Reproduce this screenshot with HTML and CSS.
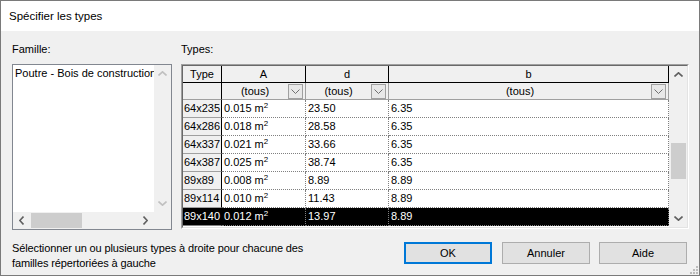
FILE: index.html
```html
<!DOCTYPE html>
<html lang="fr">
<head>
<meta charset="utf-8">
<title>Spécifier les types</title>
<link rel="stylesheet" href="styles.css">
</head>
<body>
<div class="window">
  <div class="titlebar">Spécifier les types</div>
  <div class="content">
    <div class="panes">
      <div class="pane-famille">
        <div class="label">Famille:</div>
        <div class="listbox">
          <div class="lb-main">
            <div class="lb-items"><div class="lb-item">Poutre - Bois de construction</div></div>
            <div class="lb-vscroll">
              <div class="sb-btn"><svg width="9" height="5" viewBox="0 0 9 5"><polyline points="0.5,4.5 4.5,0.8 8.5,4.5" class="chev dis"/></svg></div>
              <div class="sb-track"></div>
              <div class="sb-btn"><svg width="9" height="5" viewBox="0 0 9 5"><polyline points="0.5,0.5 4.5,4.2 8.5,0.5" class="chev dis"/></svg></div>
            </div>
          </div>
          <div class="lb-bottom">
            <div class="lb-hscroll">
              <div class="sb-hbtn"><svg width="5" height="9" viewBox="0 0 5 9"><polyline points="4.5,0.5 0.8,4.5 4.5,8.5" class="chev"/></svg></div>
              <div class="h-track"><div class="h-thumb"></div></div>
              <div class="sb-hbtn"><svg width="5" height="9" viewBox="0 0 5 9"><polyline points="0.5,0.5 4.2,4.5 0.5,8.5" class="chev"/></svg></div>
            </div>
            <div class="lb-corner"></div>
          </div>
        </div>
      </div>
      <div class="pane-types">
        <div class="label">Types:</div>
        <div class="grid-frame">
          <div class="grid-inner">
            <div class="grid">
              <div class="hc hc-type">Type</div>
              <div class="hc">A</div>
              <div class="hc">d</div>
              <div class="hc">b</div>

              <div class="fc fc-type"></div>
              <div class="fc"><span class="fc-text">(tous)</span><span class="dd"><svg width="9" height="5" viewBox="0 0 9 5"><polyline points="0.5,0.5 4.5,4.5 8.5,0.5" class="ddchev"/></svg></span></div>
              <div class="fc"><span class="fc-text">(tous)</span><span class="dd"><svg width="9" height="5" viewBox="0 0 9 5"><polyline points="0.5,0.5 4.5,4.5 8.5,0.5" class="ddchev"/></svg></span></div>
              <div class="fc"><span class="fc-text">(tous)</span><span class="dd"><svg width="9" height="5" viewBox="0 0 9 5"><polyline points="0.5,0.5 4.5,4.5 8.5,0.5" class="ddchev"/></svg></span></div>

              <div class="rc">64x235</div><div class="dc">0.015 m<span class="sup">2</span></div><div class="dc">23.50</div><div class="dc">6.35</div>
              <div class="rc">64x286</div><div class="dc">0.018 m<span class="sup">2</span></div><div class="dc">28.58</div><div class="dc">6.35</div>
              <div class="rc">64x337</div><div class="dc">0.021 m<span class="sup">2</span></div><div class="dc">33.66</div><div class="dc">6.35</div>
              <div class="rc">64x387</div><div class="dc">0.025 m<span class="sup">2</span></div><div class="dc">38.74</div><div class="dc">6.35</div>
              <div class="rc">89x89</div><div class="dc">0.008 m<span class="sup">2</span></div><div class="dc">8.89</div><div class="dc">8.89</div>
              <div class="rc">89x114</div><div class="dc">0.010 m<span class="sup">2</span></div><div class="dc">11.43</div><div class="dc">8.89</div>
              <div class="rc sel">89x140</div><div class="dc sel">0.012 m<span class="sup">2</span></div><div class="dc sel">13.97</div><div class="dc sel">8.89</div>
            </div>
            <div class="g-vscroll">
              <div class="sb-btn"><svg width="9" height="5" viewBox="0 0 9 5"><polyline points="0.5,4.5 4.5,0.8 8.5,4.5" class="chev"/></svg></div>
              <div class="g-track"><div class="g-thumb"></div></div>
              <div class="sb-btn"><svg width="9" height="5" viewBox="0 0 9 5"><polyline points="0.5,0.5 4.5,4.2 8.5,0.5" class="chev"/></svg></div>
            </div>
          </div>
        </div>
      </div>
    </div>
    <div class="footer">
      <div class="hint">Sélectionner un ou plusieurs types à droite pour chacune des<br>familles répertoriées à gauche</div>
      <div class="buttons">
        <div class="btn btn-default">OK</div>
        <div class="btn">Annuler</div>
        <div class="btn">Aide</div>
      </div>
    </div>
  </div>
  <svg class="grip" width="9" height="9" viewBox="0 0 9 9">
    <rect x="7" y="1" width="2" height="2"/>
    <rect x="4" y="4" width="2" height="2"/><rect x="7" y="4" width="2" height="2"/>
    <rect x="1" y="7" width="2" height="2"/><rect x="4" y="7" width="2" height="2"/><rect x="7" y="7" width="2" height="2"/>
  </svg>
</div>
</body>
</html>
```

FILE: styles.css
```css
* { box-sizing: border-box; }
html, body { margin: 0; padding: 0; }
body {
  width: 700px;
  height: 276px;
  overflow: hidden;
  background: #f0f0f0;
  font-family: "Liberation Sans", Arial, sans-serif;
  font-size: 11px;
  color: #000;
}
.window {
  position: relative;
  width: 700px;
  height: 276px;
  border: 1px solid #7a7a7a;
  background: #f0f0f0;
  display: flex;
  flex-direction: column;
}
.titlebar {
  height: 30px;
  background: #fff;
  line-height: 30px;
  padding-left: 8px;
  font-size: 11.5px;
}
.content {
  flex: 1;
  padding: 11px 10px 0 11px;
  display: flex;
  flex-direction: column;
}
.panes { display: flex; gap: 9px; }
.pane-famille { width: 160px; display: flex; flex-direction: column; }
.pane-types { flex: 1; display: flex; flex-direction: column; }
.label { height: 15px; line-height: 15px; margin-bottom: 7px; }

/* list box */
.listbox {
  height: 166px;
  border: 1px solid #828790;
  background: #fff;
  display: flex;
  flex-direction: column;
}
.lb-main { flex: 1; display: flex; min-height: 0; }
.lb-items { flex: 1; overflow: hidden; padding: 1px 0 0 2px; white-space: nowrap; }
.lb-item { line-height: 15px; }
.lb-vscroll {
  width: 17px;
  background: #f0f0f0;
  display: flex;
  flex-direction: column;
}
.sb-btn { height: 17px; display: flex; align-items: center; justify-content: center; }
.sb-track { flex: 1; }
.chev { fill: none; stroke: #606060; stroke-width: 1.6; }
.chev.dis { stroke: #c0c0c0; }
.lb-bottom { height: 17px; display: flex; }
.lb-hscroll { flex: 1; display: flex; background: #f0f0f0; }
.sb-hbtn { width: 17px; display: flex; align-items: center; justify-content: center; }
.h-track { flex: 1; padding: 1px 0; }
.h-thumb { width: 51px; height: 15px; background: #cdcdcd; margin-left: 1px; }
.lb-corner { width: 17px; background: #f0f0f0; }

/* grid */
.grid-frame {
  height: 165px;
  border: 1px solid;
  border-color: #a0a0a0 #fff #fff #a0a0a0;
}
.grid-inner {
  height: 100%;
  border: 1px solid;
  border-color: #696969 #e3e3e3 #e3e3e3 #696969;
  display: flex;
  background: #fff;
}
.grid {
  flex: 1;
  display: grid;
  grid-template-columns: 39px 84px 83px 280px;
  grid-template-rows: 17px 17px repeat(7, 18px);
  align-content: start;
}
.hc {
  background: #f0f0f0;
  border-right: 1px solid #000;
  border-bottom: 1px solid #000;
  line-height: 16px;
  text-align: center;
}
.fc {
  background: #f0f0f0;
  border-right: 1px solid #a0a0a0;
  border-bottom: 1px solid #a0a0a0;
  display: flex;
  align-items: center;
  padding-right: 2px;
}
.fc-type { border-right-color: #000; }
.fc-text { flex: 1; text-align: center; line-height: 16px; }
.dd {
  width: 15px;
  height: 15px;
  border: 1px solid #a0a0a0;
  background: #e8e8e8;
  display: flex;
  align-items: center;
  justify-content: center;
}
.ddchev { fill: none; stroke: #707070; stroke-width: 1; }
.rc {
  background: #f0f0f0;
  border-right: 1px solid #000;
  border-bottom: 1px solid #a0a0a0;
  line-height: 17px;
  padding-left: 1px;
  white-space: nowrap;
  overflow: hidden;
}
.dc {
  border-right: 1px dotted #808080;
  border-bottom: 1px dotted #808080;
  line-height: 17px;
  padding-left: 2px;
  white-space: nowrap;
}
.sel { background: #000; color: #fff; }
.rc.sel { border-bottom-color: #808080; }
.sup { font-size: 8px; vertical-align: 4px; line-height: 0; }

.g-vscroll { width: 18px; background: #f0f0f0; display: flex; flex-direction: column; }
.g-track { flex: 1; padding: 0 1px 0 2px; }
.g-thumb { margin-top: 60px; height: 36px; background: #cdcdcd; }

/* footer */
.footer { margin-top: 11px; display: flex; justify-content: space-between; padding-right: 2px; }
.hint { line-height: 15px; letter-spacing: -0.12px; }
.buttons { display: flex; margin-top: 1px; }
.btn {
  width: 88px;
  height: 22px;
  margin-left: 9px;
  background: #e1e1e1;
  border: 1px solid #adadad;
  display: flex;
  align-items: center;
  justify-content: center;
}
.btn-default { border: 2px solid #0078d7; margin-right: 1px; }

.grip { position: absolute; right: 1px; bottom: 1px; fill: #bcbcbc; }
```
